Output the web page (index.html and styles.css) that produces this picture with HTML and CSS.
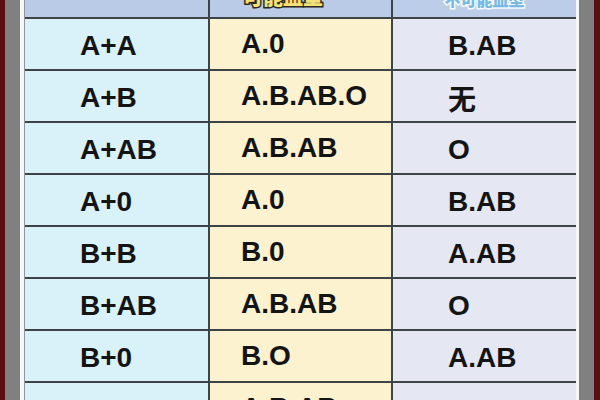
FILE: index.html
```html
<!DOCTYPE html>
<html lang="zh">
<head>
<meta charset="utf-8">
<title>血型表</title>
<link rel="stylesheet" href="styles.css">
</head>
<body>
<div class="frame">
  <div class="edge-red-left"></div>
  <div class="edge-gray"></div>
  <div class="edge-white-left"></div>
  <div class="chart">
    <div class="hd c1"></div>
    <div class="hd c2"><span class="hd-text hd-yellow">可能血型</span></div>
    <div class="hd c3 center"><span class="hd-text hd-blue">不可能血型</span></div>

    <div class="cell c1">A+A</div><div class="cell c2">A.0</div><div class="cell c3">B.AB</div>
    <div class="cell c1">A+B</div><div class="cell c2">A.B.AB.O</div><div class="cell c3">无</div>
    <div class="cell c1">A+AB</div><div class="cell c2">A.B.AB</div><div class="cell c3">O</div>
    <div class="cell c1">A+0</div><div class="cell c2">A.0</div><div class="cell c3">B.AB</div>
    <div class="cell c1">B+B</div><div class="cell c2">B.0</div><div class="cell c3">A.AB</div>
    <div class="cell c1">B+AB</div><div class="cell c2">A.B.AB</div><div class="cell c3">O</div>
    <div class="cell c1">B+0</div><div class="cell c2">B.O</div><div class="cell c3">A.AB</div>
    <div class="cell c1"></div><div class="cell c2">A.B.AB</div><div class="cell c3"></div>
  </div>
  <div class="edge-white-right"></div>
  <div class="edge-gray"></div>
  <div class="edge-red-right"></div>
</div>
</body>
</html>
```
FILE: styles.css
```css
html, body {
  margin: 0;
  padding: 0;
  width: 600px;
  height: 400px;
  overflow: hidden;
  background: #7f7f7f;
}

.frame {
  display: flex;
  width: 600px;
  height: 400px;
  overflow: hidden;
}

.edge-red-left { width: 5px; background: #5a0e10; flex: none; }
.edge-red-right { width: 6px; background: #5a0e10; flex: none; }
.edge-gray { width: 15px; background: #808080; flex: none; }
.edge-white-left { width: 4px; background: #f4f6f7; flex: none; }
.edge-white-right { width: 3px; background: #f4f6f7; flex: none; }

.chart {
  flex: none;
  width: 552px;
  box-sizing: border-box;
  border-left: 1px solid #8d979c;
  display: grid;
  grid-template-columns: 183px 181px 183px;
  grid-template-rows: 17px repeat(8, 50px);
  gap: 2px;
  background: #3c4448;
  align-content: start;
}

.hd {
  background: #b9cbe7;
  overflow: hidden;
  display: flex;
  align-items: flex-end;
  padding-bottom: 10px;
  box-sizing: border-box;
}
.hd.c2 { padding-left: 33px; }
.hd.c3 { background: #bccde9; }
.hd.center { justify-content: center; }

.hd-text {
  font-family: "Noto Sans CJK SC", sans-serif;
  font-weight: 900;
  line-height: 1;
  paint-order: stroke fill;
}
.hd-yellow {
  font-size: 20px;
  color: #f3e27a;
  -webkit-text-stroke: 3px #2b2a1c;
}
.hd-blue {
  font-size: 16px;
  color: #78b9e6;
  -webkit-text-stroke: 3px #f4f8fc;
}

.cell {
  display: flex;
  align-items: center;
  padding-top: 4px;
  box-sizing: border-box;
  font-family: "Liberation Sans", "Noto Sans CJK SC", Arial, sans-serif;
  font-weight: 700;
  font-size: 28px;
  color: #141414;
  white-space: nowrap;
}
.cell.c1 { background: #d9f1f8; padding-left: 55px; }
.cell.c2 { background: #fcf2cf; padding-left: 31px; padding-top: 0; align-items: flex-end; padding-bottom: 9px; }
.cell.c3 { background: #e5e8f3; padding-left: 55px; }
```
